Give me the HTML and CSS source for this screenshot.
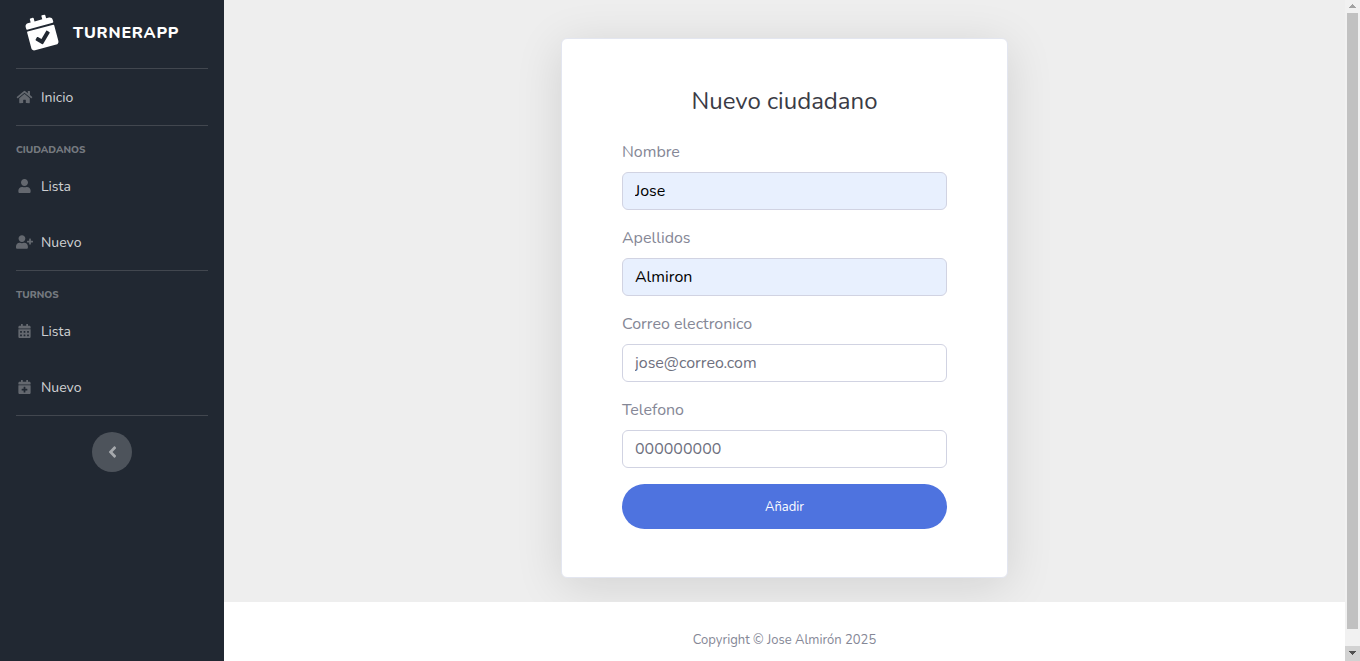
FILE: index.html
```html
<!DOCTYPE html>
<html lang="es">
<head>
<meta charset="utf-8">
<meta name="viewport" content="width=device-width, initial-scale=1">
<title>TurnerApp - Nuevo ciudadano</title>
<link rel="stylesheet" href="styles.css">
</head>
<body>
<div class="wrapper">
  <nav class="sidebar">
    <a class="brand" href="#">
      <svg class="brand-icon" viewBox="0 0 448 512" aria-hidden="true"><path d="M436 160H12c-6.627 0-12-5.373-12-12v-36c0-26.51 21.49-48 48-48h48V12c0-6.627 5.373-12 12-12h40c6.627 0 12 5.373 12 12v52h128V12c0-6.627 5.373-12 12-12h40c6.627 0 12 5.373 12 12v52h48c26.51 0 48 21.49 48 48v36c0 6.627-5.373 12-12 12zM12 192h424c6.627 0 12 5.373 12 12v260c0 26.51-21.49 48-48 48H48c-26.51 0-48-21.49-48-48V204c0-6.627 5.373-12 12-12zm333.296 95.947l-28.169-28.398c-4.667-4.705-12.265-4.736-16.97-.068L194.12 364.665l-45.98-46.352c-4.667-4.705-12.266-4.736-16.971-.068l-28.397 28.17c-4.705 4.667-4.736 12.265-.068 16.97l82.601 83.269c4.667 4.705 12.265 4.736 16.97.068l142.953-141.805c4.705-4.667 4.736-12.265.068-16.97z"/></svg>
      <span class="brand-text">TURNERAPP</span>
    </a>
    <hr class="divider">
    <a class="nav-link" href="#">
      <svg class="nav-icon" viewBox="0 0 576 512" aria-hidden="true"><path d="M280.37 148.26L96 300.11V464a16 16 0 0 0 16 16l112.06-.29a16 16 0 0 0 15.92-16V368a16 16 0 0 1 16-16h64a16 16 0 0 1 16 16v95.64a16 16 0 0 0 16 16.05L464 480a16 16 0 0 0 16-16V300L295.67 148.26a12.19 12.19 0 0 0-15.3 0zM571.6 251.47L488 182.56V44.05a12 12 0 0 0-12-12h-56a12 12 0 0 0-12 12v72.61L318.47 43a48 48 0 0 0-61 0L4.34 251.47a12 12 0 0 0-1.6 16.9l25.5 31A12 12 0 0 0 45.15 301l235.22-193.74a12.19 12.19 0 0 1 15.3 0L530.9 301a12 12 0 0 0 16.9-1.6l25.5-31a12 12 0 0 0-1.7-16.93z"/></svg>
      <span>Inicio</span>
    </a>
    <hr class="divider">
    <div class="nav-heading">CIUDADANOS</div>
    <a class="nav-link" href="#">
      <svg class="nav-icon" viewBox="0 0 448 512" aria-hidden="true"><path d="M224 256c70.7 0 128-57.3 128-128S294.7 0 224 0 96 57.3 96 128s57.3 128 128 128zm89.6 32h-16.7c-22.2 10.2-46.9 16-72.9 16s-50.6-5.8-72.9-16h-16.7C60.2 288 0 348.2 0 422.4V464c0 26.5 21.5 48 48 48h352c26.5 0 48-21.5 48-48v-41.6c0-74.2-60.2-134.4-134.4-134.4z"/></svg>
      <span>Lista</span>
    </a>
    <a class="nav-link" href="#">
      <svg class="nav-icon" viewBox="0 0 640 512" aria-hidden="true"><path d="M624 208h-64v-64c0-8.800-7.200-16-16-16h-32c-8.800 0-16 7.200-16 16v64h-64c-8.800 0-16 7.200-16 16v32c0 8.800 7.200 16 16 16h64v64c0 8.800 7.200 16 16 16h32c8.800 0 16-7.200 16-16v-64h64c8.800 0 16-7.200 16-16v-32c0-8.800-7.200-16-16-16zM224 256c70.7 0 128-57.3 128-128S294.7 0 224 0 96 57.3 96 128s57.3 128 128 128zm89.6 32h-16.7c-22.2 10.2-46.9 16-72.9 16s-50.6-5.8-72.9-16h-16.7C60.2 288 0 348.2 0 422.4V464c0 26.5 21.5 48 48 48h352c26.5 0 48-21.5 48-48v-41.6c0-74.2-60.2-134.4-134.4-134.4z"/></svg>
      <span>Nuevo</span>
    </a>
    <hr class="divider">
    <div class="nav-heading">TURNOS</div>
    <a class="nav-link" href="#">
      <svg class="nav-icon" viewBox="0 0 448 512" aria-hidden="true"><path fill-rule="evenodd" d="M400 64h-48V12c0-7-5-12-12-12h-40c-7 0-12 5-12 12v52H160V12c0-7-5-12-12-12h-40c-7 0-12 5-12 12v52H48C21.500 64 0 85.500 0 112v36c0 7 5 12 12 12h424c7 0 12-5 12-12v-36c0-26.500-21.500-48-48-48zM0 192h448v272c0 26.500-21.500 48-48 48H48c-26.500 0-48-21.500-48-48zM76 256h40q12 0 12 12v40q0 12-12 12H76q-12 0-12-12v-40q0-12 12-12zM204 256h40q12 0 12 12v40q0 12-12 12h-40q-12 0-12-12v-40q0-12 12-12zM332 256h40q12 0 12 12v40q0 12-12 12h-40q-12 0-12-12v-40q0-12 12-12zM76 384h40q12 0 12 12v40q0 12-12 12H76q-12 0-12-12v-40q0-12 12-12zM204 384h40q12 0 12 12v40q0 12-12 12h-40q-12 0-12-12v-40q0-12 12-12zM332 384h40q12 0 12 12v40q0 12-12 12h-40q-12 0-12-12v-40q0-12 12-12z"/></svg>
      <span>Lista</span>
    </a>
    <a class="nav-link" href="#">
      <svg class="nav-icon" viewBox="0 0 448 512" aria-hidden="true"><path fill-rule="evenodd" d="M400 64h-48V12c0-7-5-12-12-12h-40c-7 0-12 5-12 12v52H160V12c0-7-5-12-12-12h-40c-7 0-12 5-12 12v52H48C21.500 64 0 85.500 0 112v36c0 7 5 12 12 12h424c7 0 12-5 12-12v-36c0-26.500-21.500-48-48-48zM12 192h424q12 0 12 12v260c0 26.500-21.500 48-48 48H48c-26.500 0-48-21.500-48-48V204q0-12 12-12zM328 332q0-12-12-12h-60v-60q0-12-12-12h-40q-12 0-12 12v60h-60q-12 0-12 12v40q0 12 12 12h60v60q0 12 12 12h40q12 0 12-12v-60h60q12 0 12-12z"/></svg>
      <span>Nuevo</span>
    </a>
    <hr class="divider">
    <button class="sidebar-toggle" type="button" aria-label="Contraer menú">
      <svg class="toggle-icon" viewBox="0 0 256 512" aria-hidden="true"><path d="M31.7 239l136-136c9.4-9.4 24.6-9.4 33.9 0l22.6 22.6c9.4 9.4 9.4 24.6 0 33.9L127.9 256l96.4 96.4c9.4 9.4 9.4 24.6 0 33.9L201.7 409c-9.4 9.4-24.6 9.4-33.9 0l-136-136c-9.5-9.4-9.5-24.6-.1-34z"/></svg>
    </button>
  </nav>

  <div class="content">
    <main class="main">
      <section class="card">
        <h1 class="card-title">Nuevo ciudadano</h1>
        <form class="form">
          <div class="field">
            <label for="nombre">Nombre</label>
            <input class="filled" id="nombre" type="text" value="Jose">
          </div>
          <div class="field">
            <label for="apellidos">Apellidos</label>
            <input class="filled" id="apellidos" type="text" value="Almiron">
          </div>
          <div class="field">
            <label for="correo">Correo electronico</label>
            <input id="correo" type="email" placeholder="jose@correo.com">
          </div>
          <div class="field">
            <label for="telefono">Telefono</label>
            <input id="telefono" type="tel" placeholder="000000000">
          </div>
          <button class="submit" type="submit">Añadir</button>
        </form>
      </section>
    </main>
    <footer class="footer">Copyright © Jose Almirón 2025</footer>
  </div>

  <div class="scrollbar" aria-hidden="true">
    <svg class="scroll-arrow" viewBox="0 0 15 13"><path fill="#a3a3a3" d="M7 4h1v1h1v1h1v1h1v1H4V7h1V6h1V5h1z"/></svg>
    <div class="scroll-track"><div class="scroll-thumb"></div></div>
    <svg class="scroll-arrow scroll-arrow-down" viewBox="0 0 15 15"><path fill="#505050" d="M4 5h7v1h-1v1H9v1H8v1H7V8H6V7H5V6H4z"/></svg>
  </div>
</div>
</body>
</html>
```
FILE: styles.css
```css
* {
  box-sizing: border-box;
}

body {
  margin: 0;
  background: #fff;
  color: #858796;
  font-family: Nunito, "Open Sans", "Noto Sans", sans-serif;
  font-size: 16px;
  line-height: 24px;
}

.wrapper {
  display: flex;
  height: 100vh;
  overflow: hidden;
}

/* Sidebar */
.sidebar {
  display: flex;
  flex-direction: column;
  flex: 0 0 224px;
  background: #212832;
}

.brand {
  display: flex;
  align-items: center;
  gap: 14px;
  height: 68px;
  padding: 0 24px 4px;
  color: #fff;
  font-weight: 800;
  letter-spacing: 0.05em;
  line-height: 26px;
  text-decoration: none;
}

.brand-text {
  padding-top: 2px;
}

.brand-icon {
  width: 35px;
  height: 32px;
  fill: currentColor;
  overflow: visible;
  transform: rotate(-15deg);
}

.divider {
  width: auto;
  height: 1px;
  margin: 0 16px;
  border: 0;
  background: #42474f;
}

.nav-link {
  display: flex;
  align-items: center;
  gap: 8px;
  height: 56px;
  padding: 0 16px;
  color: rgba(255, 255, 255, 0.8);
  font-size: 14px;
  line-height: 22px;
  text-decoration: none;
}

.nav-link span {
  padding-top: 2px;
}

.nav-icon {
  width: 17px;
  height: 14px;
  fill: rgba(255, 255, 255, 0.3);
}

.nav-heading {
  height: 32px;
  padding: 17px 16px 0;
  color: rgba(255, 255, 255, 0.4);
  font-size: 10px;
  font-weight: 800;
  line-height: 14px;
}

.sidebar-toggle {
  display: flex;
  align-items: center;
  justify-content: center;
  align-self: center;
  width: 40px;
  height: 40px;
  margin: 16px 0;
  padding: 0;
  border: 0;
  border-radius: 50%;
  background: rgba(255, 255, 255, 0.2);
}

.toggle-icon {
  width: 9px;
  height: 18px;
  fill: rgba(255, 255, 255, 0.5);
}

/* Content */
.content {
  display: flex;
  flex: 1;
  flex-direction: column;
  min-width: 0;
}

.main {
  display: flex;
  flex: 0 0 auto;
  justify-content: center;
  padding: 38px 24px 24px;
  background: #eee;
}

.card {
  flex: 0 0 calc(100% * 5 / 12);
  padding: 48px 60px;
  border: 1px solid #e3e6f0;
  border-radius: 6px;
  background: #fff;
  box-shadow: 0 8px 48px rgba(0, 0, 0, 0.12);
}

.card-title {
  margin: 0 0 24px;
  color: #3a3b45;
  font-size: 24px;
  font-weight: 400;
  line-height: 29px;
  text-align: center;
}

.form {
  display: flex;
  flex-direction: column;
  gap: 16px;
}

.field {
  display: flex;
  flex-direction: column;
  gap: 8px;
}

.field input {
  width: 100%;
  height: 38px;
  padding: 6px 12px;
  border: 1px solid #d1d3e2;
  border-radius: 6px;
  background: #fff;
  color: #000;
  font: inherit;
}

.field input.filled {
  background: #e8f0fe;
}

.field input::placeholder {
  color: #6e707e;
  opacity: 1;
}

.submit {
  height: 45px;
  border: 0;
  border-radius: 160px;
  background: #4e73df;
  color: #fff;
  font: inherit;
  font-size: 13px;
}

.footer {
  position: relative;
  flex: 1 0 auto;
  padding: 32px 0;
  background: #fff;
  font-size: 13px;
  line-height: 13px;
  text-align: center;
}

/* Scrollbar */
.scrollbar {
  display: flex;
  flex: 0 0 15px;
  flex-direction: column;
  background: #f1f1f1;
}

.scroll-arrow {
  flex: 0 0 auto;
  width: 15px;
  height: 13px;
}

.scroll-arrow-down {
  height: 15px;
  background: #d2d2d2;
}

.scroll-track {
  flex: 1;
  padding: 0 2px 17px;
}

.scroll-thumb {
  height: 100%;
  background: #c1c1c1;
}
```
